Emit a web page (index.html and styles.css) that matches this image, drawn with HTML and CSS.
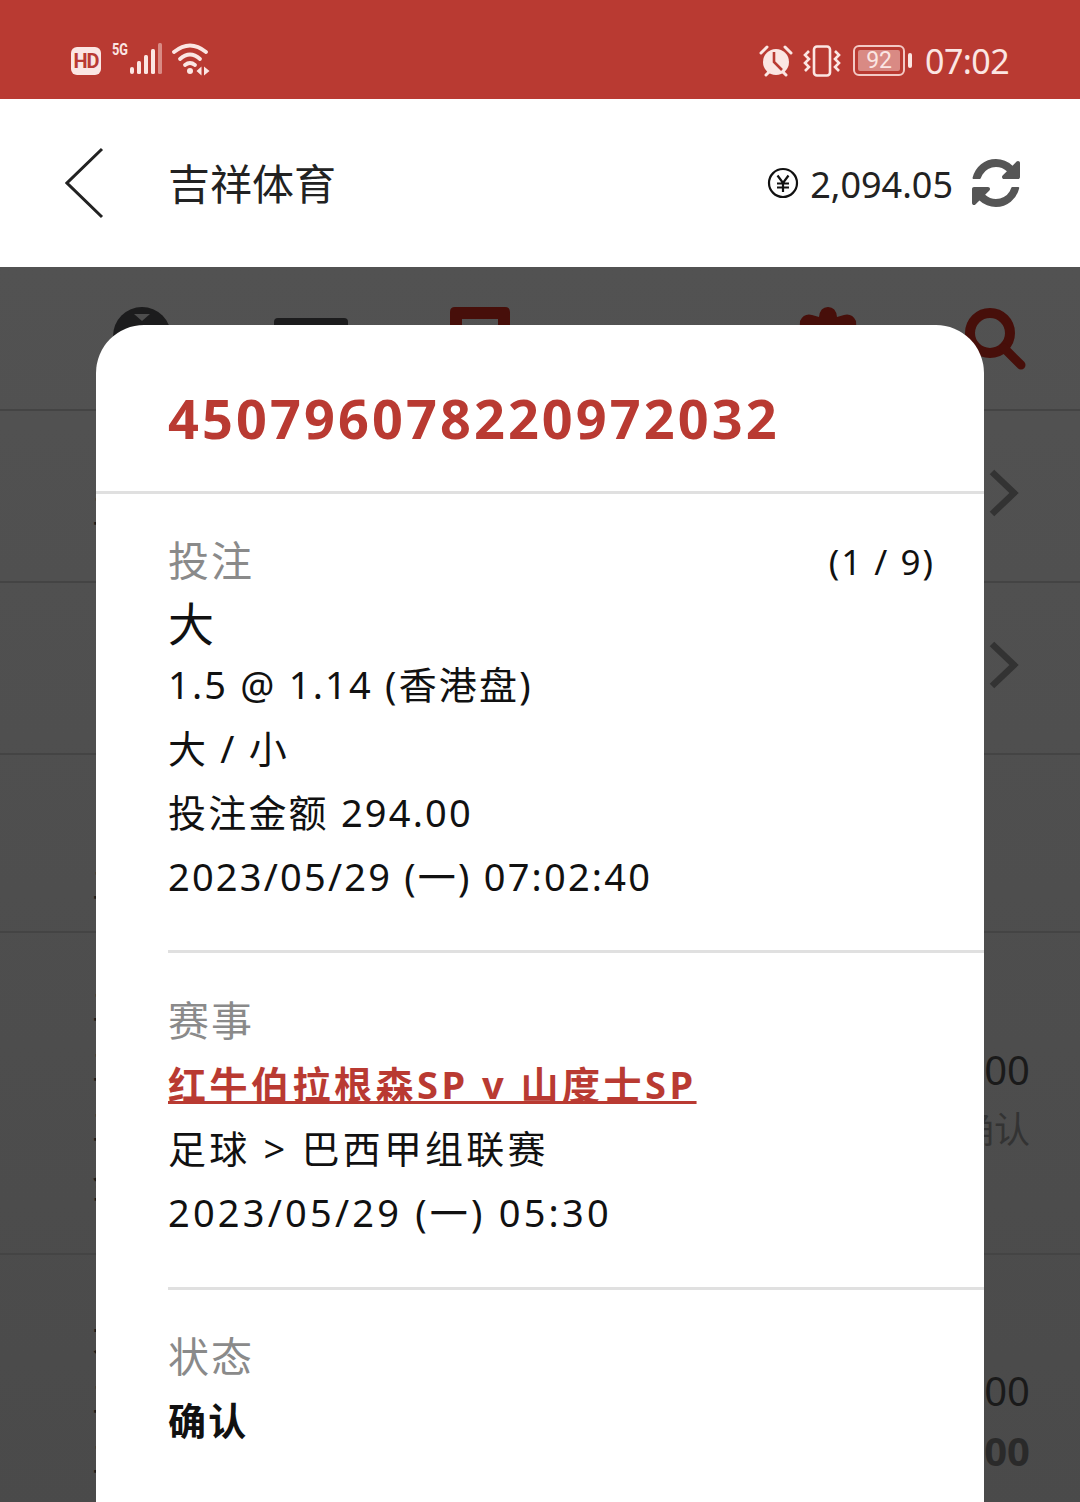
FILE: index.html
```html
<!DOCTYPE html>
<html lang="zh-CN">
<head>
    <meta charset="UTF-8">
    <meta name="viewport" content="width=device-width, initial-scale=1.0">
    <title>吉祥体育</title>
    <link rel="stylesheet" href="styles.css">
</head>
<body>

<div class="screen">
    <!-- Barra de estado -->
    <div class="status-bar">
        <div class="status-left">
            <span class="hd-badge">HD</span>
            <svg class="signal" width="50" height="38" viewBox="0 -4 50 38">
                <text x="0" y="13" class="signal-text" textLength="16" lengthAdjust="spacingAndGlyphs">5G</text>
                <rect x="18" y="25" width="4" height="7" rx="2" fill="#fbe6e3"/>
                <rect x="25" y="19" width="4" height="13" rx="1.5" fill="#fbe6e3"/>
                <rect x="32" y="13" width="4" height="19" rx="1.5" fill="#fbe6e3"/>
                <rect x="39" y="7" width="4" height="25" rx="1.5" fill="#fbe6e3"/>
                <rect x="46" y="1" width="4" height="31" rx="1.5" fill="#d98a84"/>
            </svg>
            <svg class="wifi" width="40" height="34" viewBox="0 0 40 34" fill="none" stroke="#fbe6e3" stroke-width="3.8" stroke-linecap="round">
                <path d="M2 10 Q18 -3 34 10"/>
                <path d="M8 17 Q18 8 28 17"/>
                <path d="M13 23 Q18 19 23 23"/>
                <circle cx="18" cy="29" r="3" fill="#fbe6e3" stroke="none"/>
                <path d="M29.5 24.5 l-5 4.5 5 4.5z M32 24.5 l5.5 4.5 -5.5 4.5z" fill="#fbe6e3" stroke="none"/>
            </svg>
        </div>
        <div class="status-right">
            <svg width="34" height="34" viewBox="0 0 34 34">
                <circle cx="17" cy="18" r="13" fill="#fbe6e3"/>
                <path d="M15 8 V18 L23 26" fill="none" stroke="#b93a32" stroke-width="2.6"/>
                <path d="M2 9 L8 3 M32 9 L26 3 M7 31 L10 28 M27 31 L24 28" stroke="#fbe6e3" stroke-width="3" stroke-linecap="round"/>
            </svg>
            <svg class="vibrate" width="38" height="32" viewBox="0 0 38 32" fill="none" stroke="#fbe6e3" stroke-width="2.6">
                <rect x="11" y="1.5" width="16" height="29" rx="3"/>
                <path d="M6 6 L2 10 L6 14 L2 18 L6 22 L2 26"/>
                <path d="M32 6 L36 10 L32 14 L36 18 L32 22 L36 26"/>
            </svg>
            <div class="battery">
                <div class="battery-body"><span class="battery-fill">92</span></div>
                <span class="battery-cap"></span>
            </div>
            <span class="status-time">07:02</span>
        </div>
    </div>

    <!-- Cabecera -->
    <div class="app-header">
        <svg class="back-icon" width="40" height="72" viewBox="0 0 40 72" fill="none" stroke="#222" stroke-width="3">
            <path d="M37 2 L2 36 L37 70"/>
        </svg>
        <span class="app-title">吉祥体育</span>
        <div class="balance">
            <svg width="32" height="32" viewBox="0 0 32 32" fill="none" stroke="#111" stroke-width="2.2">
                <circle cx="16" cy="16" r="14"/>
                <path d="M10.5 8.5 L16 16 L21.5 8.5 M10 16.5 H22 M10 20.5 H22 M16 16 V25"/>
            </svg>
            <span class="balance-value">2,094.05</span>
            <svg width="48" height="56" viewBox="0 0 1536 1792" fill="#555">
                <path d="M1511 1056q0 5-1 7-64 268-268 434.5t-478 166.5q-146 0-282.5-55t-243.5-157l-129 129q-19 19-45 19t-45-19-19-45v-448q0-26 19-45t45-19h448q26 0 45 19t19 45-19 45l-137 137q71 66 161 102t187 36q134 0 250-65t186-179q11-17 53-117 8-23 30-23h192q13 0 22.5 9.5t9.5 22.5zm25-800v448q0 26-19 45t-45 19h-448q-26 0-45-19t-19-45 19-45l138-138q-148-137-349-137-134 0-250 65t-186 179q-11 17-53 117-8 23-30 23h-199q-13 0-22.5-9.5t-9.5-22.5v-7q65-268 270-434.5t480-166.5q146 0 284 55.5t245 156.5l130-129q19-19 45-19t45 19 19 45z"/>
            </svg>
        </div>
    </div>

    <!-- Contenido detrás del modal -->
    <div class="backdrop">
        <div class="toolbar">
            <svg width="58" height="58" viewBox="0 0 58 58">
                <circle cx="29" cy="29" r="29" fill="#1c1c1d"/>
                <path d="M21 7 H37 L29 14z" fill="#4d4d4d"/>
            </svg>
            <svg width="74" height="46" viewBox="0 0 74 46" class="toolbar-low">
                <rect width="74" height="46" rx="4" fill="#1c1c1d"/>
            </svg>
            <svg width="60" height="58" viewBox="0 0 60 58">
                <path fill-rule="evenodd" d="M5 0 H55 Q60 0 60 5 V58 H0 V5 Q0 0 5 0z M12 12 V58 H48 V12z" fill="#470f0a"/>
            </svg>
            <span></span>
            <svg class="toolbar-gear" width="60" height="58" viewBox="0 0 60 58">
                <path d="M21 10 Q22 0 30 0 Q38 0 39 10 L46 8 Q54 6 58 14 L60 58 H0 L2 14 Q6 6 14 8z" fill="#470f0a"/>
            </svg>
            <svg class="toolbar-search" width="62" height="64" viewBox="0 0 62 64" fill="none" stroke="#470f0a" stroke-width="10">
                <circle cx="26" cy="26" r="20"/>
                <path d="M40 41 L57 58" stroke-linecap="round" stroke-width="9"/>
            </svg>
        </div>
        <div class="row row-short">
            <div class="row-left">主</div>
            <svg class="chevron" width="30" height="48" viewBox="0 0 30 48" fill="none" stroke="#333" stroke-width="6.5"><path d="M3 3 L25 24 L3 45"/></svg>
        </div>
        <div class="row row-short">
            <svg class="chevron" width="30" height="48" viewBox="0 0 30 48" fill="none" stroke="#333" stroke-width="6.5"><path d="M3 3 L25 24 L3 45"/></svg>
        </div>
        <div class="row row-mid">
            <div class="row-left row-left-mid">主</div>
        </div>
        <div class="row row-tall">
            <div class="row-left">
                <p>主</p>
                <p>主</p>
                <p>主</p>
                <p>金</p>
            </div>
            <div class="row-right">
                <p>300.00</p>
                <p class="row-state">确认</p>
            </div>
        </div>
        <div class="row row-last">
            <div class="row-left">
                <p>大</p>
                <p>主</p>
                <p>主</p>
            </div>
            <div class="row-right">
                <p>300.00</p>
                <p class="row-bold">300.00</p>
            </div>
        </div>

        <!-- Modal de detalle -->
        <div class="modal">
            <div class="modal-head">450796078220972032</div>
            <div class="section section-first">
                <span class="section-count">(1 / 9)</span>
                <div class="label">投注</div>
                <div class="pick">大</div>
                <div class="line">1.5 @ 1.14 (香港盘)</div>
                <div class="line">大 / 小</div>
                <div class="line">投注金额 294.00</div>
                <div class="line">2023/05/29 (一) 07:02:40</div>
            </div>
            <div class="section section-wide">
                <div class="label">赛事</div>
                <div class="line match-link">红牛伯拉根森SP v 山度士SP</div>
                <div class="line">足球 &gt; 巴西甲组联赛</div>
                <div class="line">2023/05/29 (一) 05:30</div>
            </div>
            <div class="section section-state">
                <div class="label">状态</div>
                <div class="line state">确认</div>
            </div>
        </div>
    </div>
</div>

</body>
</html>
```

FILE: styles.css
```css
* {
    box-sizing: border-box;
}
body {
    margin: 0;
    font-family: "Noto Sans", "Noto Sans CJK SC", sans-serif;
    color: #111;
    background-color: #4b4b4b;
}
p {
    margin: 0;
}
.screen {
    width: 1080px;
    height: 1502px;
    overflow: hidden;
    display: flex;
    flex-direction: column;
}

/* Barra de estado */
.status-bar {
    height: 99px;
    flex: none;
    display: flex;
    justify-content: space-between;
    align-items: center;
    padding: 22px 71px 0 71px;
    background-color: #b93a32;
    color: #fbe6e3;
}
.status-left, .status-right {
    display: flex;
    align-items: center;
}
.hd-badge {
    width: 30px;
    height: 28px;
    border-radius: 6px;
    background-color: #fbe6e3;
    color: #b93a32;
    font-size: 20px;
    font-weight: 700;
    line-height: 28px;
    text-align: center;
    letter-spacing: -1px;
    font-family: "Roboto", sans-serif;
}
.signal {
    margin-left: 11px;
    margin-top: -8px;
}
.signal-text {
    font-family: "Roboto", sans-serif;
    font-size: 17px;
    font-weight: 700;
    fill: #fbe6e3;
}
.wifi {
    margin-left: 10px;
    margin-top: -4px;
}
.status-right svg {
    flex: none;
}
.vibrate {
    margin-left: 10px;
}
.battery {
    display: flex;
    align-items: center;
    margin-left: 12px;
}
.battery-body {
    width: 52px;
    height: 31px;
    padding: 3px;
    border: 2px solid #f3c9c5;
    border-radius: 6px;
}
.battery-fill {
    display: block;
    width: 42px;
    height: 21px;
    border-radius: 2px;
    background-color: #d98a84;
    font-size: 23px;
    line-height: 21px;
    text-align: center;
    font-family: "Roboto", sans-serif;
}
.battery-cap {
    width: 4px;
    height: 15px;
    margin-left: 3px;
    border-radius: 2px;
    background-color: #fbe6e3;
}
.status-time {
    margin-left: 13px;
    font-size: 34px;
    font-weight: 400;
    line-height: 40px;
    letter-spacing: -0.6px;
}

/* Cabecera */
.app-header {
    height: 168px;
    flex: none;
    display: flex;
    align-items: center;
    padding: 0 60px 0 65px;
    background-color: #fff;
}
.app-title {
    margin: 1px 0 0 63px;
    font-size: 42px;
    line-height: 56px;
    color: #222;
}
.balance {
    margin-left: auto;
    display: flex;
    align-items: center;
    color: #222;
}
.balance svg:first-child {
    margin-left: 1px;
}
.balance-value {
    margin: 3px 19px 0 11px;
    font-size: 36px;
    line-height: 50px;
}

/* Contenido detrás del modal */
.backdrop {
    position: relative;
    flex: 1;
    background: linear-gradient(#525252, #4a4a4a);
}
.toolbar {
    height: 144px;
    display: grid;
    grid-template-columns: repeat(6, 169px);
    justify-items: center;
    align-items: start;
    padding: 40px 0 0 57px;
    border-bottom: 2px solid #444;
}
.toolbar-low {
    margin-top: 11px;
}
.toolbar-gear {
    margin-left: 21px;
}
.toolbar-search {
    margin-left: 16px;
}
.row {
    display: flex;
    justify-content: space-between;
    align-items: flex-start;
    padding: 0 50px 0 92px;
    border-bottom: 2px solid #444;
    color: #1a1a1a;
    font-size: 38px;
    line-height: 60px;
    overflow: hidden;
}
.row-short {
    height: 172px;
    position: relative;
    justify-content: flex-end;
}
.row-short .row-left {
    position: absolute;
    left: 92px;
    top: 66px;
}
.chevron {
    margin: 58px 11px 0 0;
}
.row-mid {
    height: 178px;
    padding-top: 96px;
}
.row-tall {
    height: 322px;
    padding-top: 40px;
}
.row-tall .row-right {
    margin-top: 67px;
}
.row-last {
    height: 260px;
    padding-top: 50px;
}
.row-last .row-right {
    margin-top: 56px;
}
.row-right {
    text-align: right;
    font-size: 40px;
}
.row-state {
    color: #333;
    font-size: 36px;
}
.row-bold {
    color: #2a2a2a;
    font-weight: 700;
}

/* Modal de detalle */
.modal {
    position: absolute;
    left: 96px;
    top: 58px;
    width: 888px;
    height: 1200px;
    border-radius: 48px 48px 0 0;
    background-color: #fff;
}
.modal-head {
    height: 169px;
    padding: 58px 0 0 72px;
    border-bottom: 3px solid #e0e0e0;
    color: #b93a32;
    font-size: 54px;
    font-weight: 700;
    line-height: 70px;
    letter-spacing: 3.1px;
}
.section {
    margin-left: 72px;
    padding: 35px 0 41px;
    border-bottom: 3px solid #e0e0e0;
}
.section-first {
    position: relative;
    margin-left: 0;
    padding: 34px 0 42px 72px;
}
.section-first::after {
    content: "";
    position: absolute;
    left: 0;
    width: 72px;
    bottom: -3px;
    height: 3px;
    background-color: #fff;
}
.section-wide {
    padding-bottom: 43px;
}
.section-state {
    padding-top: 34px;
    border-bottom: none;
}
.section-count {
    position: absolute;
    right: 49px;
    top: 46px;
    font-size: 35px;
    line-height: 44px;
    letter-spacing: 2px;
}
.label {
    height: 64px;
    color: #8a8a8a;
    font-size: 41px;
    line-height: 64px;
    letter-spacing: 2px;
}
.pick {
    height: 60px;
    font-size: 46px;
    line-height: 62px;
}
.line {
    height: 64px;
    font-size: 38px;
    line-height: 64px;
    letter-spacing: 2.2px;
    white-space: nowrap;
}
.section-wide .line {
    letter-spacing: 3.2px;
}
.section-wide .match-link {
    letter-spacing: 3.5px;
}
.match-link {
    color: #b93a32;
    font-weight: 700;
    text-decoration: underline;
}
.state {
    font-weight: 700;
}
```
